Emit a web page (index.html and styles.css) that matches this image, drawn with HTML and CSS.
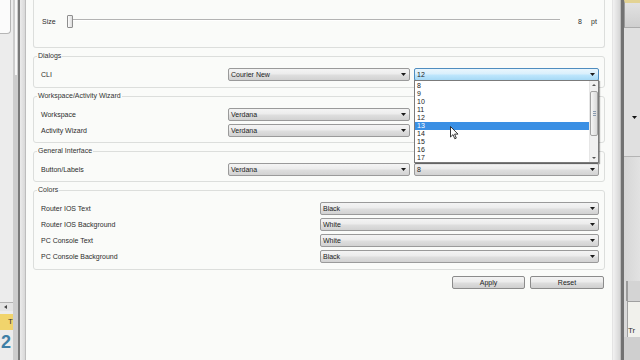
FILE: index.html
```html
<!DOCTYPE html>
<html>
<head>
<meta charset="utf-8">
<link rel="stylesheet" href="styles.css">
</head>
<body>
<div class="screen">
  <aside class="bg-left">
    <div class="bl-panel">
      <div class="bl-box"></div>
      <div class="bl-fill"></div>
      <div class="bl-hscroll"><span class="bl-arrow"></span></div>
      <div class="bl-yellow">T</div>
      <div class="bl-blue">2</div>
    </div>
    <div class="bl-scroll"><div class="bl-thumb"></div></div>
    <div class="bl-dark"></div>
    <div class="bl-frame"></div>
  </aside>

  <main class="dialog">
    <div class="group-top">
      <span class="size-label">Size</span>
      <div class="slider"><span class="handle"></span><span class="groove"></span></div>
      <span class="size-val">8</span>
      <span class="size-unit">pt</span>
    </div>

    <fieldset class="group pb6">
      <legend>Dialogs</legend>
      <div class="rows">
        <div class="row three">
          <span class="label">CLI</span>
          <div class="combo">Courier New</div>
          <div class="combo focus">12</div>
        </div>
      </div>
    </fieldset>

    <fieldset class="group">
      <legend>Workspace/Activity Wizard</legend>
      <div class="rows">
        <div class="row three">
          <span class="label">Workspace</span>
          <div class="combo">Verdana</div>
          <span></span>
        </div>
        <div class="row three">
          <span class="label">Activity Wizard</span>
          <div class="combo">Verdana</div>
          <span></span>
        </div>
      </div>
    </fieldset>

    <fieldset class="group">
      <legend>General Interface</legend>
      <div class="rows">
        <div class="row three">
          <span class="label">Button/Labels</span>
          <div class="combo">Verdana</div>
          <div class="combo">8</div>
        </div>
      </div>
    </fieldset>

    <fieldset class="group pb6">
      <legend>Colors</legend>
      <div class="rows">
        <div class="row two">
          <span class="label">Router IOS Text</span>
          <div class="combo">Black</div>
        </div>
        <div class="row two">
          <span class="label">Router IOS Background</span>
          <div class="combo">White</div>
        </div>
        <div class="row two">
          <span class="label">PC Console Text</span>
          <div class="combo">White</div>
        </div>
        <div class="row two">
          <span class="label">PC Console Background</span>
          <div class="combo">Black</div>
        </div>
      </div>
    </fieldset>

    <div class="buttons">
      <button class="btn apply">Apply</button>
      <button class="btn reset">Reset</button>
    </div>

    <div class="popup">
      <ul class="list">
        <li>8</li><li>9</li><li>10</li><li>11</li><li>12</li>
        <li class="sel">13</li><li>14</li><li>15</li><li>16</li><li>17</li>
      </ul>
      <div class="sb">
        <div class="sb-btn"><span class="tri up"></span></div>
        <div class="sb-track"><div class="sb-thumb"><span class="grip"></span></div></div>
        <div class="sb-btn"><span class="tri"></span></div>
      </div>
    </div>

    <svg class="cursor" width="9" height="14" viewBox="0 0 9 14">
      <path d="M0.5 0.5 L0.5 11 L3 8.6 L4.8 12.8 L6.3 12.1 L4.6 8.1 L8 8.1 Z" fill="#ffffff" stroke="#222" stroke-width="0.9" stroke-linejoin="round"/>
    </svg>
  </main>

  <div class="frame-r"></div>
  <div class="line-r"></div>
  <aside class="bg-right">
    <div class="br-top"></div>
    <div class="br-mid"><span class="br-arrow"></span></div>
    <div class="br-low"></div>
    <div class="br-tab"></div>
    <div class="br-tab2">Tr</div>
    <div class="br-end"></div>
  </aside>
</div>
</body>
</html>
```

FILE: styles.css
```css
* { box-sizing: border-box; }
html, body { margin: 0; padding: 0; }
body {
  width: 640px;
  height: 360px;
  overflow: hidden;
  font-family: "Liberation Sans", Arial, sans-serif;
  font-size: 7px;
  color: #2c2c2c;
  background: #fafbf9;
}
.screen { display: flex; height: 360px; }

/* left background window */
.bg-left { width: 26px; display: flex; flex-shrink: 0; }
.bl-panel { width: 13px; display: flex; flex-direction: column; background: #ececec; }
.bl-box {
  width: 11px; height: 34px; background: #fbfbfb;
  border-right: 1px solid #b5b5b5; border-bottom: 1px solid #b5b5b5;
  border-bottom-right-radius: 4px;
}
.bl-fill { flex: 1; }
.bl-hscroll {
  height: 9px; background: #e4e4e4; border-top: 1px solid #b3b3b3;
  display: flex; align-items: center; padding-left: 4px;
}
.bl-arrow { width: 3px; height: 4px; background: #444; clip-path: polygon(100% 0, 100% 100%, 0 50%); }
.bl-yellow {
  height: 16px; margin-top: 3px; background: #f1d46c;
  font-size: 8px; line-height: 16px; text-align: right; color: #333; overflow: hidden;
}
.bl-blue {
  height: 30px; padding: 2px 0 0 1px; font-size: 18px; font-weight: bold; line-height: 20px;
  color: #3f7fa6; background: #ececec;
}
.bl-scroll { width: 5px; background: #cdcdcd; display: flex; justify-content: center; }
.bl-thumb { width: 2px; height: 75px; background: #f7f7f7; }
.bl-dark { width: 2px; background: #7a7a7a; }
.bl-frame { width: 6px; background: linear-gradient(90deg, #ebebeb, #d8d8d8); border-right: 1px solid #bdbdbd; }

/* dialog */
.dialog {
  width: 586px; flex-shrink: 0; padding: 0 7px;
  display: flex; flex-direction: column;
  position: relative; background: #fafbf9;
}
.group-top {
  height: 48px;
  border: 1px solid #dcdedc; border-top: 0;
  border-radius: 0 0 3px 3px;
  display: flex; align-items: center;
  padding: 0 0 5px 8px;
}
.size-label { width: 25px; }
.slider { width: 493px; height: 13px; display: flex; align-items: center; }
.handle {
  width: 6px; height: 13px; flex-shrink: 0;
  border: 1px solid #8e8e8e; border-radius: 1px;
  background: linear-gradient(90deg, #fdfdfd, #dcdcdc);
}
.groove { flex: 1; height: 2px; border-top: 1px solid #b3b3b3; border-bottom: 1px solid #ffffff; margin-top: -2px; }
.size-val { width: 22px; text-align: right; color: #2c2c2c; }
.size-unit { margin-left: 9px; color: #2c2c2c; }

.group {
  margin: 4px 0 0; min-width: 0;
  padding: 8px 5px 5px 3px;
  border: 1px solid #dcdedc; border-radius: 3px;
}
.group.pb6 { padding-bottom: 6px; }
.group legend {
  padding: 0 1px; font-size: 7px; line-height: 8px; color: #333;
}
.rows { display: grid; row-gap: 3px; margin-left: 4px; }
.row { display: grid; column-gap: 4px; align-items: center; }
.row.three { grid-template-columns: 1fr 182px 185px; }
.row.two { grid-template-columns: 1fr 279px; }
.label { white-space: nowrap; }

.combo {
  height: 13px;
  display: flex; align-items: center; justify-content: space-between;
  padding: 0 3px 0 2px;
  border: 1px solid #9a9a9a; border-radius: 2px;
  background: linear-gradient(#f4f4f4 0%, #ececec 45%, #dedede 55%, #d2d2d2 100%);
  color: #222; white-space: nowrap;
}
.combo::after {
  content: ""; width: 5px; height: 3px; background: #1a1a1a;
  clip-path: polygon(0 0, 100% 0, 50% 100%);
}
.combo.focus {
  border-color: #4f8dbf;
  background: linear-gradient(#eaf6fd 0%, #d9effc 45%, #bee6fd 55%, #a7d9f5 100%);
}

.buttons { display: flex; justify-content: flex-end; gap: 5px; margin-top: 6px; margin-right: 1px; }
.btn {
  height: 13px; padding: 0; margin: 0;
  font-family: "Liberation Sans", Arial, sans-serif; font-size: 7px; color: #222;
  border: 1px solid #8b8b8b; border-radius: 2px;
  background: linear-gradient(#f3f3f3 0%, #ebebeb 45%, #dddddd 55%, #cfcfcf 100%);
}
.apply { width: 73px; }
.reset { width: 74px; }

/* dropdown popup overlay */
.popup {
  position: absolute; left: 388px; top: 80px;
  width: 185px; height: 83px;
  display: flex;
  background: #ffffff;
  border: 1px solid #7b7b7b;
  box-shadow: 1px 1px 1px rgba(0,0,0,0.35);
}
.list { list-style: none; margin: 0; padding: 1px 0 0; flex: 1; }
.list li { height: 8px; line-height: 8px; padding-left: 2px; color: #222; }
.list li.sel { background: #3a8fe4; color: #ffffff; }
.sb { width: 9px; display: flex; flex-direction: column; background: #f0f0f0; border-left: 1px solid #e6e6e6; }
.sb-btn { height: 8px; display: flex; align-items: center; justify-content: center; }
.tri { width: 4px; height: 2px; background: #555; clip-path: polygon(0 0, 100% 0, 50% 100%); }
.tri.up { clip-path: polygon(50% 0, 100% 100%, 0 100%); }
.sb-track { flex: 1; padding-top: 2px; }
.sb-thumb {
  height: 45px;
  border: 1px solid #a3a3a3; border-radius: 2px;
  background: linear-gradient(90deg, #f6f6f6, #dadada);
  display: flex; align-items: center; justify-content: center;
}
.grip { width: 3px; height: 5px; background: repeating-linear-gradient(#8a9bb0 0 1px, transparent 1px 2px); }

.cursor { position: absolute; left: 424px; top: 126px; }

/* right background */
.frame-r { width: 8px; flex-shrink: 0; background: linear-gradient(90deg, #f2f2f2, #d6d6d6); border-left: 1px solid #e4e4e4; }
.line-r { width: 4px; flex-shrink: 0; background: #727272; border-left: 1px solid #bcbcbc; }
.bg-right { width: 16px; flex-shrink: 0; display: flex; flex-direction: column; background: #dadada; }
.br-top { height: 28px; border-top: 3px solid #e3d394; border-left: 1px solid #9a9a9a; border-bottom: 1px solid #ababab; background: linear-gradient(#e2e2e2, #cfcfcf); }
.br-mid { height: 129px; border-bottom: 1px solid #b4b4b4; display: flex; justify-content: flex-end; padding: 88px 3px 0 0; background: #e0e0e0; }
.br-arrow { width: 5px; height: 3px; background: #111; clip-path: polygon(0 0, 100% 0, 50% 100%); }
.br-low { height: 124px; background: linear-gradient(90deg, #d6d6d6, #e2e2e2); }
.br-tab { height: 20px; border-left: 2px solid #9b9b9b; margin-left: 2px; background: #d4d4d4; }
.br-tab2 { height: 36px; margin-left: 3px; background: #f1f1ec; border-left: 1px solid #a0a0a0; border-top: 1px solid #a0a0a0; font-size: 8px; line-height: 58px; overflow: hidden; color: #333; }
.br-end { flex: 1; background: #cfcfcf; }
```
